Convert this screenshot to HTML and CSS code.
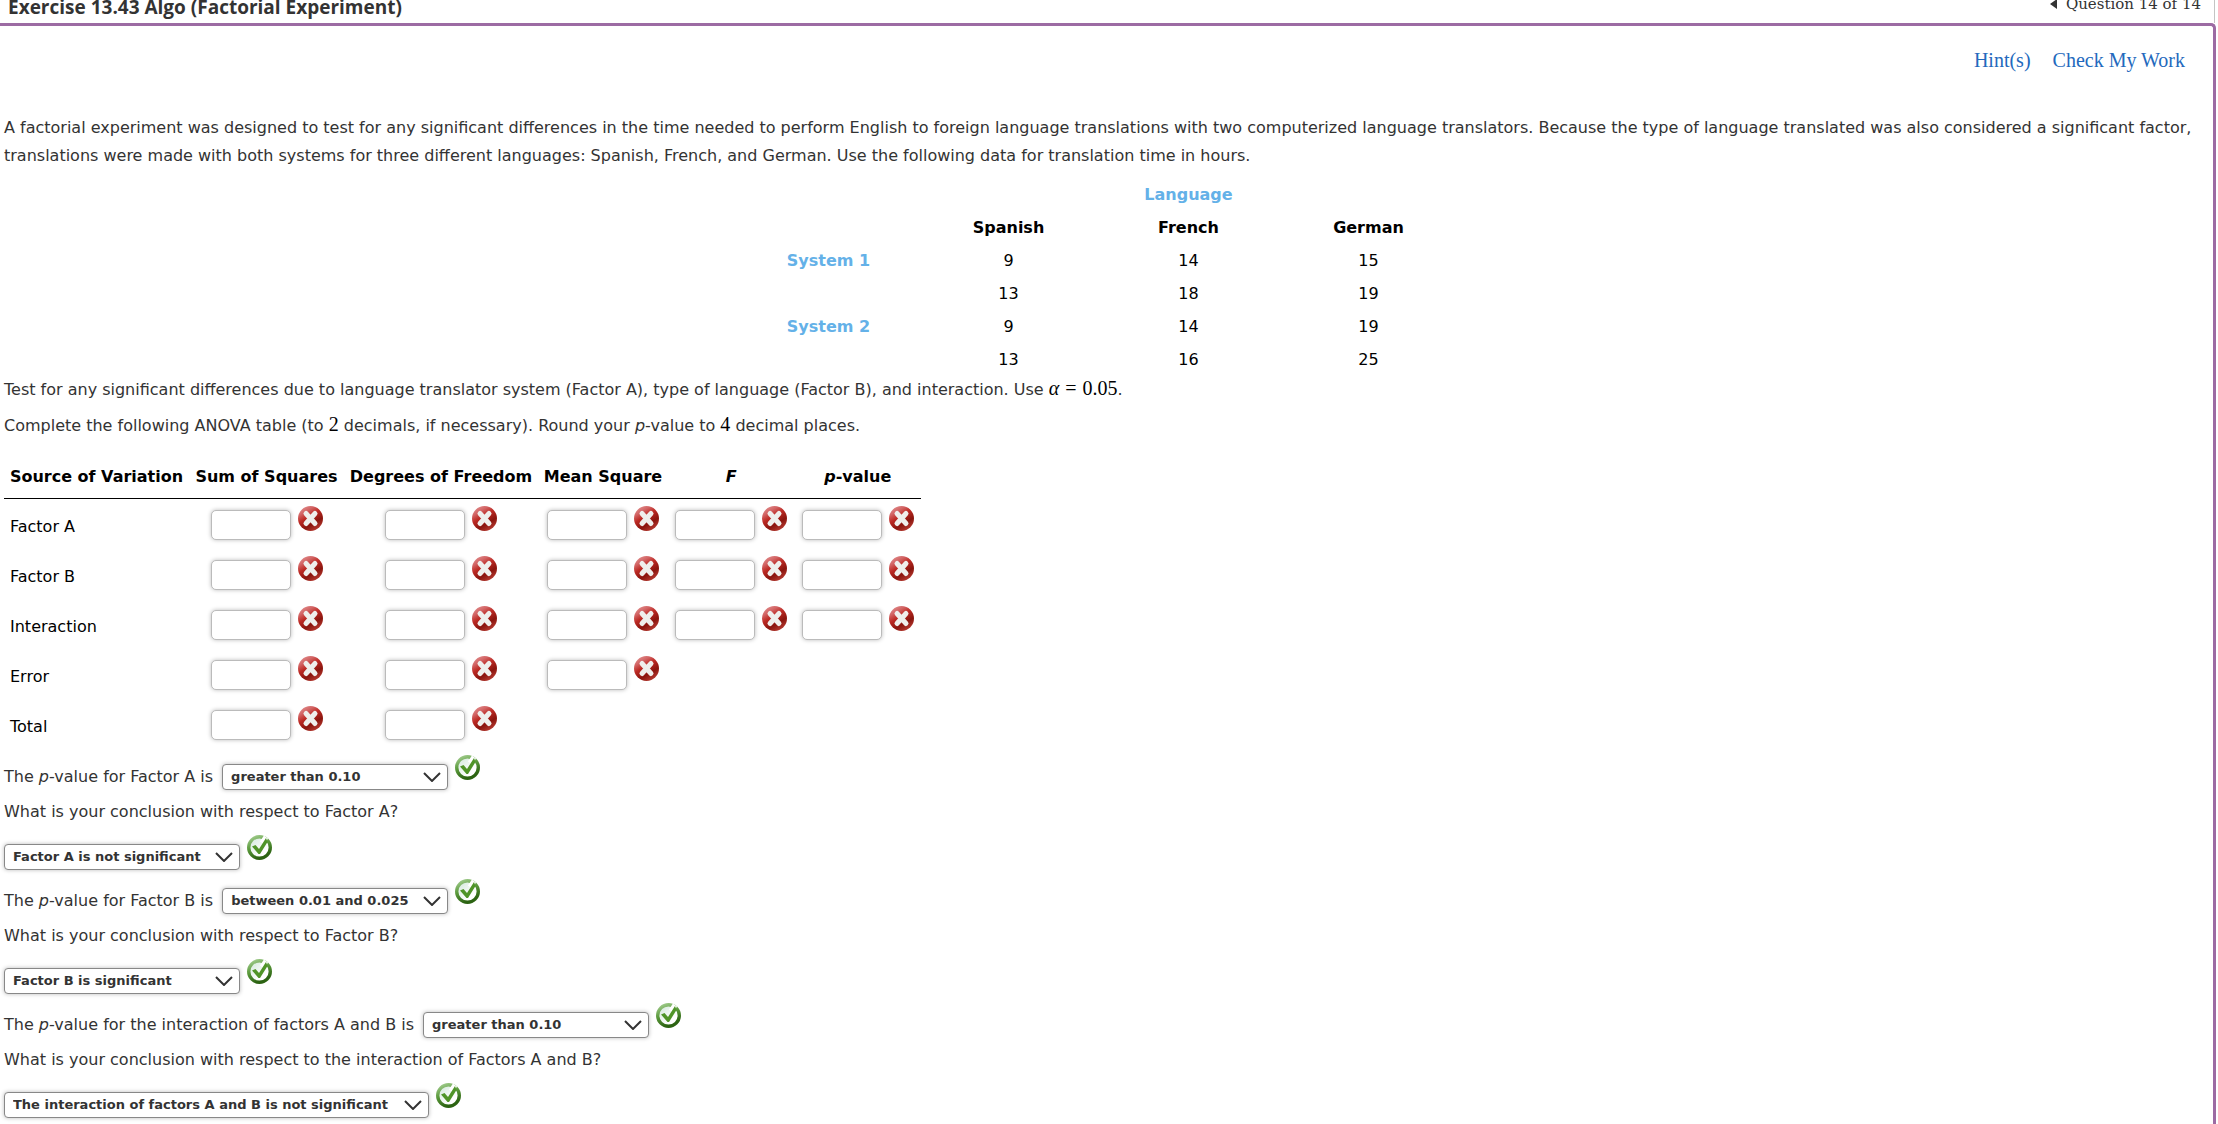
FILE: index.html
```html
<!DOCTYPE html>
<html lang="en">
<head>
<meta charset="utf-8">
<title>Exercise 13.43 Algo (Factorial Experiment)</title>
<link rel="stylesheet" href="styles.css">
</head>
<body>
<svg class="sprite" aria-hidden="true">
  <defs>
    <linearGradient id="red" x1="0" y1="0" x2="0.6" y2="1">
      <stop offset="0" stop-color="#e8a0a0"/><stop offset="0.3" stop-color="#d26464"/><stop offset="0.5" stop-color="#bd2a24"/><stop offset="0.78" stop-color="#8a150e"/><stop offset="1" stop-color="#b0352c"/>
    </linearGradient>
    <linearGradient id="green" x1="0" y1="0" x2="0.4" y2="1">
      <stop offset="0" stop-color="#a5cf92"/><stop offset="0.5" stop-color="#5b9a3c"/><stop offset="1" stop-color="#2c6312"/>
    </linearGradient>
    <linearGradient id="pale" x1="0" y1="0" x2="1" y2="1">
      <stop offset="0" stop-color="#cfe6d8"/><stop offset="0.7" stop-color="#ffffff"/>
    </linearGradient>
    <symbol id="wrong" viewBox="0 0 25 25">
      <circle cx="12.5" cy="12.5" r="12.5" fill="url(#red)"/>
      <path d="M8 7.500 17 17.500M17 7.500 8 17.500" stroke="#efefec" stroke-width="5" stroke-linecap="round"/>
    </symbol>
    <symbol id="right" viewBox="0 0 25 25">
      <circle cx="12.5" cy="12.500" r="10.800" fill="url(#pale)" stroke="url(#green)" stroke-width="3.400"/>
      <path d="M15 8 19 2" fill="none" stroke="#ffffff" stroke-width="5"/>
      <path d="M5 11.500 8.500 10 12 14 19 3 20.500 7 13 19 11.500 19Z" fill="#4f9427"/>
    </symbol>
  </defs>
</svg>
<header class="bar">
  <h1 class="title">Exercise 13.43 Algo (Factorial Experiment)</h1>
  <div class="pager"><svg class="prev" viewBox="0 0 7 10" aria-hidden="true"><path d="M7 0V10L0 5Z"/></svg>Question 14 of 14</div>
</header>
<main class="panel">
  <nav class="tools"><a href="#hints">Hint(s)</a><a href="#check">Check My Work</a></nav>
  <p class="intro">A factorial experiment was designed to test for any significant differences in the time needed to perform English to foreign language translations with two computerized language translators. Because the type of language translated was also considered a significant factor, translations were made with both systems for three different languages: Spanish, French, and German. Use the following data for translation time in hours.</p>
  <table class="data">
    <tr><td></td><th class="accent" colspan="3">Language</th></tr>
    <tr><td></td><th>Spanish</th><th>French</th><th>German</th></tr>
    <tr><th class="accent">System 1</th><td>9</td><td>14</td><td>15</td></tr>
    <tr><td></td><td>13</td><td>18</td><td>19</td></tr>
    <tr><th class="accent">System 2</th><td>9</td><td>14</td><td>19</td></tr>
    <tr><td></td><td>13</td><td>16</td><td>25</td></tr>
  </table>
  <p class="task">Test for any significant differences due to language translator system (Factor A), type of language (Factor B), and interaction. Use <span class="math"><i>α</i><span class="equals">=</span>0.05</span>.</p>
  <p class="task">Complete the following ANOVA table (to <span class="math">2</span> decimals, if necessary). Round your <i>p</i>-value to <span class="math">4</span> decimal places.</p>
  <table class="anova">
    <colgroup><col class="c-source"><col class="c-sum"><col class="c-degrees"><col class="c-mean"><col class="c-stat"><col class="c-stat"></colgroup>
    <thead><tr><th>Source of Variation</th><th>Sum of Squares</th><th>Degrees of Freedom</th><th>Mean Square</th><th><i>F</i></th><th><i>p</i>-value</th></tr></thead>
    <tbody>
      <tr><th>Factor A</th>
        <td><div class="answer"><input aria-label="Factor A sum of squares"><svg class="mark"><use href="#wrong"/></svg></div></td>
        <td><div class="answer"><input aria-label="Factor A degrees of freedom"><svg class="mark"><use href="#wrong"/></svg></div></td>
        <td><div class="answer"><input aria-label="Factor A mean square"><svg class="mark"><use href="#wrong"/></svg></div></td>
        <td><div class="answer"><input aria-label="Factor A F"><svg class="mark"><use href="#wrong"/></svg></div></td>
        <td><div class="answer"><input aria-label="Factor A p-value"><svg class="mark"><use href="#wrong"/></svg></div></td></tr>
      <tr><th>Factor B</th>
        <td><div class="answer"><input aria-label="Factor B sum of squares"><svg class="mark"><use href="#wrong"/></svg></div></td>
        <td><div class="answer"><input aria-label="Factor B degrees of freedom"><svg class="mark"><use href="#wrong"/></svg></div></td>
        <td><div class="answer"><input aria-label="Factor B mean square"><svg class="mark"><use href="#wrong"/></svg></div></td>
        <td><div class="answer"><input aria-label="Factor B F"><svg class="mark"><use href="#wrong"/></svg></div></td>
        <td><div class="answer"><input aria-label="Factor B p-value"><svg class="mark"><use href="#wrong"/></svg></div></td></tr>
      <tr><th>Interaction</th>
        <td><div class="answer"><input aria-label="Interaction sum of squares"><svg class="mark"><use href="#wrong"/></svg></div></td>
        <td><div class="answer"><input aria-label="Interaction degrees of freedom"><svg class="mark"><use href="#wrong"/></svg></div></td>
        <td><div class="answer"><input aria-label="Interaction mean square"><svg class="mark"><use href="#wrong"/></svg></div></td>
        <td><div class="answer"><input aria-label="Interaction F"><svg class="mark"><use href="#wrong"/></svg></div></td>
        <td><div class="answer"><input aria-label="Interaction p-value"><svg class="mark"><use href="#wrong"/></svg></div></td></tr>
      <tr><th>Error</th>
        <td><div class="answer"><input aria-label="Error sum of squares"><svg class="mark"><use href="#wrong"/></svg></div></td>
        <td><div class="answer"><input aria-label="Error degrees of freedom"><svg class="mark"><use href="#wrong"/></svg></div></td>
        <td><div class="answer"><input aria-label="Error mean square"><svg class="mark"><use href="#wrong"/></svg></div></td>
        <td></td><td></td></tr>
      <tr><th>Total</th>
        <td><div class="answer"><input aria-label="Total sum of squares"><svg class="mark"><use href="#wrong"/></svg></div></td>
        <td><div class="answer"><input aria-label="Total degrees of freedom"><svg class="mark"><use href="#wrong"/></svg></div></td>
        <td></td><td></td><td></td></tr>
    </tbody>
  </table>
  <section class="questions">
    <div class="choice"><label for="pa">The <i>p</i>-value for Factor A is</label><select id="pa" class="range"><option>greater than 0.10</option></select><svg class="mark"><use href="#right"/></svg></div>
    <label class="ask" for="ca">What is your conclusion with respect to Factor A?</label>
    <div class="choice verdict"><select id="ca" class="factor"><option>Factor A is not significant</option></select><svg class="mark"><use href="#right"/></svg></div>
    <div class="choice"><label for="pb">The <i>p</i>-value for Factor B is</label><select id="pb" class="range"><option>between 0.01 and 0.025</option></select><svg class="mark"><use href="#right"/></svg></div>
    <label class="ask" for="cb">What is your conclusion with respect to Factor B?</label>
    <div class="choice verdict"><select id="cb" class="factor"><option>Factor B is significant</option></select><svg class="mark"><use href="#right"/></svg></div>
    <div class="choice"><label for="pi">The <i>p</i>-value for the interaction of factors A and B is</label><select id="pi" class="range"><option>greater than 0.10</option></select><svg class="mark"><use href="#right"/></svg></div>
    <label class="ask" for="ci">What is your conclusion with respect to the interaction of Factors A and B?</label>
    <div class="choice verdict"><select id="ci" class="interaction"><option>The interaction of factors A and B is not significant</option></select><svg class="mark"><use href="#right"/></svg></div>
  </section>
</main>
</body>
</html>
```
FILE: styles.css
```css
* { box-sizing: border-box; }
body {
  margin: 0;
  height: 100vh;
  overflow: hidden;
  background: #fff;
  color: #333;
  font: 16px/28px Verdana, "DejaVu Sans", sans-serif;
}
.sprite { position: absolute; width: 0; height: 0; }
.bar {
  display: flex;
  justify-content: space-between;
  height: 23px;
  margin-right: 3px;
  padding: 0 13px 0 8px;
  border-right: 1px solid #c4c4c4;
}
.title { margin: 0; font: bold 19px/14px "Open Sans", sans-serif; }
.pager {
  display: flex;
  align-items: center;
  gap: 9px;
  height: 8px;
  font: 15px/8px "DejaVu Serif", serif;
}
.prev { width: 7px; height: 10px; fill: #333; }
.panel {
  min-height: 100vh;
  margin-right: 2px;
  padding: 0 20px 0 4px;
  border-top: 3px solid #9c6ba3;
  border-right: 3px solid #9c6ba3;
  border-top-right-radius: 5px;
}
.tools {
  display: flex;
  justify-content: flex-end;
  gap: 22px;
  padding: 20px 8px 40px 0;
  font: 20px/28px "Liberation Serif", serif;
}
.tools a { color: #2369bd; text-decoration: none; }
p { margin: 0; }
.data {
  width: 720px;
  margin: 8px auto -4px;
  border-collapse: collapse;
  table-layout: fixed;
  color: #000;
  text-align: center;
}
.data td, .data th { height: 33px; padding: 0; }
.data .accent { color: #64b1e8; }
.task { padding: 4px 0; }
.math { color: #000; font: 20px/20px "Liberation Serif", serif; }
.equals { margin: 0 6px; }
.anova {
  width: 917px;
  margin-top: 17px;
  border-collapse: collapse;
  table-layout: fixed;
  color: #000;
}
.c-source { width: 185px; }
.c-sum { width: 155px; }
.c-degrees { width: 194px; }
.c-mean { width: 130px; }
.anova th { padding: 0; white-space: nowrap; }
.anova thead th { height: 37px; padding-bottom: 4px; border-bottom: 1px solid #000; }
.anova tbody th { padding: 8px 0 0 6px; text-align: left; font-weight: normal; }
.anova td { height: 50px; padding: 0; }
.answer { display: flex; justify-content: center; align-items: flex-start; gap: 7px; height: 34px; }
.answer input {
  width: 80px;
  height: 30px;
  margin-top: 4px;
  border: 1px solid #bbb;
  border-radius: 5px;
  background: #fff;
  box-shadow: 0 0 4px #bbb;
}
.questions { margin-top: 7px; }
.mark { flex: none; width: 25px; height: 25px; }
.choice { display: flex; align-items: center; gap: 7px; height: 43px; margin-top: 1px; }
.choice .mark { margin-bottom: 18px; }
.choice label { margin-right: 2px; }
.ask { display: block; }
.verdict { margin-top: 9px; }
select {
  appearance: none;
  height: 26px;
  padding: 0 0 0 8px;
  border: 1px solid #888;
  border-radius: 4px;
  background: #fff url("data:image/svg+xml,%3Csvg xmlns='http://www.w3.org/2000/svg' width='18' height='10'%3E%3Cpath d='M1 1 9 9 17 1' fill='none' stroke='%23333' stroke-width='2'/%3E%3C/svg%3E") no-repeat right 6px center;
  box-shadow: 0 0 4px #bbb;
  color: #333;
  font: bold 13px/20px Verdana, "DejaVu Sans", sans-serif;
}
.range { width: 226px; }
.factor { width: 236px; }
.interaction { width: 425px; }
```
